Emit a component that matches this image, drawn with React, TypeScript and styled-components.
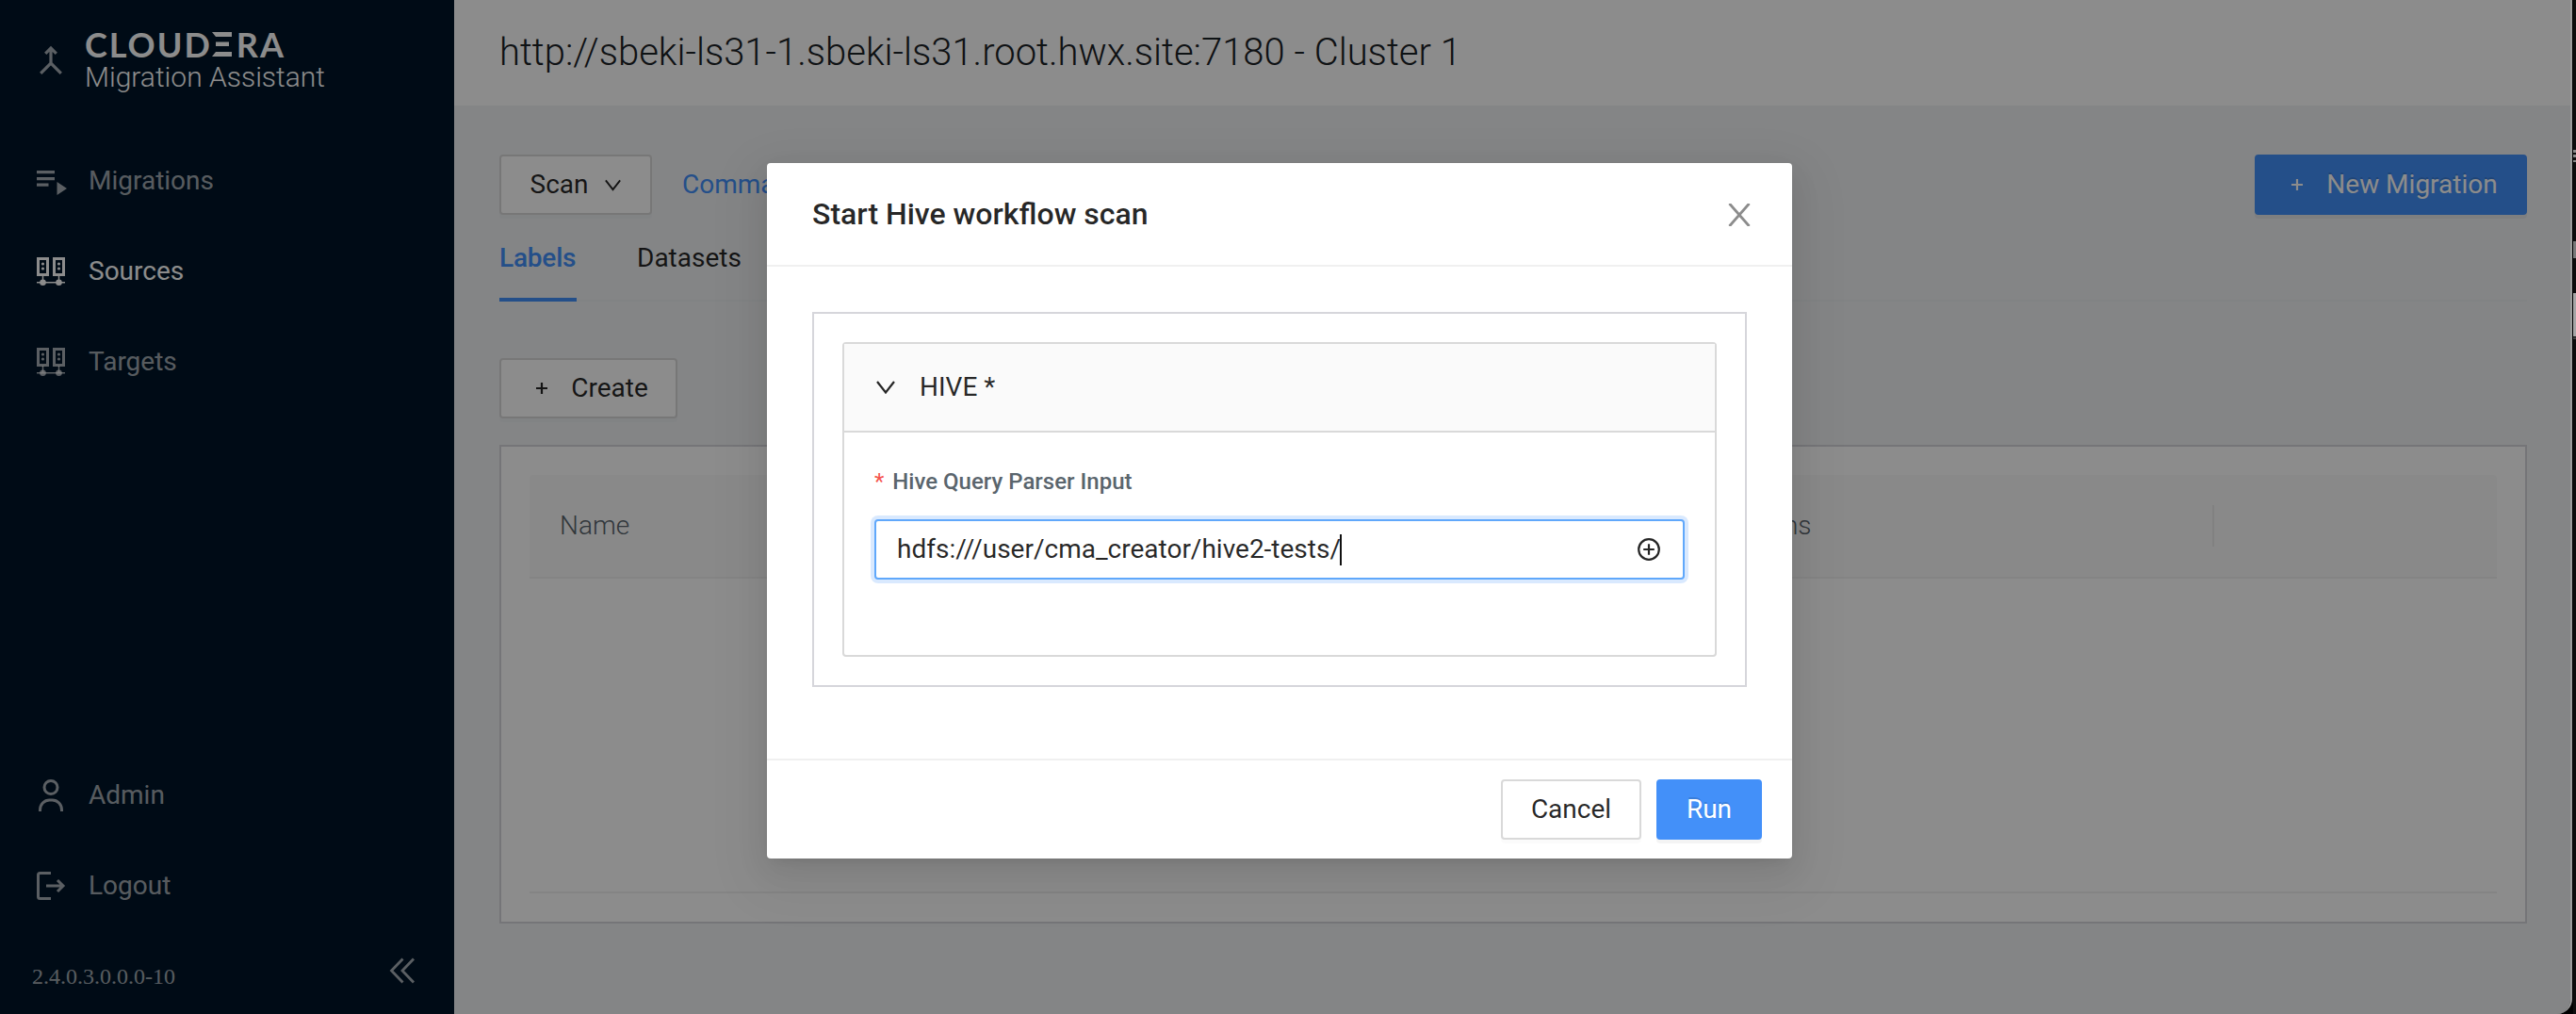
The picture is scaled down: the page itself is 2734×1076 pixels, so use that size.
import React from "react";
import styled, { createGlobalStyle, css } from "styled-components";

const GlobalStyle = createGlobalStyle`
  *, *::before, *::after { box-sizing: border-box; }
  html, body { margin: 0; padding: 0; background: #000; }
  body { font-family: Roboto, "Liberation Sans", sans-serif; font-size: 28px; overflow: hidden; }
  button, input { font-family: inherit; }
`;

const Desktop = styled.div`
  display: flex;
  width: 2734px;
  height: 1076px;
  background: #000;
  overflow: hidden;
`;

const Window = styled.div`
  position: relative;
  display: flex;
  width: 2730px;
  height: 1076px;
  border-right: 2px solid #9c9c9c;
  border-bottom-right-radius: 16px;
  overflow: hidden;
`;

const Backdrop = styled.div`
  display: flex;
  flex-direction: column;
  align-items: flex-end;
  width: 4px;
  padding: 159px 0 0 1px;
  background: #0d0d0d;
  border-left: 1px solid #000;
`;

const BackdropBar = styled.i<{ $gap: number; $height: number; $tone: string }>`
  flex: none;
  width: 3px;
  height: ${(p) => p.$height}px;
  margin-top: ${(p) => p.$gap}px;
  background: ${(p) => p.$tone};
`;

const Sidebar = styled.aside`
  display: flex;
  flex-direction: column;
  flex: none;
  width: 482px;
  height: 100%;
  background: #001529;
`;

const Brand = styled.div`
  display: flex;
  align-items: flex-start;
  height: 152px;
  padding: 28px 0 0 34px;
`;

const BrandIcon = styled.span`
  display: flex;
  width: 56px;
  padding: 20px 0 0 7px;
  color: rgba(255, 255, 255, 0.65);
`;

const BrandText = styled.div`
  display: flex;
  flex-direction: column;
  color: #fff;
`;

const Wordmark = styled.div`
  display: flex;
  height: 38px;
  font-family: Lato, "Open Sans", sans-serif;
  font-size: 36px;
  font-weight: 700;
  line-height: 38px;
  letter-spacing: 2px;
`;

const BarredLetter = styled.span`
  position: relative;
  width: 26px;
  color: transparent;

  svg {
    position: absolute;
    left: 0;
    top: 6px;
    color: #fff;
  }
`;

const ProductName = styled.div`
  font-size: 30px;
  font-weight: 300;
  line-height: 32px;
  white-space: nowrap;
`;

const Menu = styled.nav`
  display: flex;
  flex-direction: column;
  gap: 16px;
`;

const MenuItem = styled.a<{ $active?: boolean }>`
  display: flex;
  align-items: center;
  height: 80px;
  padding-left: 36px;
  color: ${(p) => (p.$active ? "#fff" : "rgba(255, 255, 255, 0.65)")};
  font-size: 28px;
  line-height: 40px;

  svg { flex: none; margin-right: 22px; }
`;

const SidebarFoot = styled.div`
  display: flex;
  flex-direction: column;
  margin-top: auto;
`;

const VersionRow = styled.div`
  display: flex;
  align-items: center;
  justify-content: space-between;
  height: 96px;
  padding: 4px 41px 0 34px;
  color: rgba(255, 255, 255, 0.65);
`;

const Version = styled.span`
  padding-top: 12px;
  font-family: "Liberation Serif", serif;
  font-size: 24px;
  line-height: 28px;
`;

const Main = styled.main`
  display: flex;
  flex: 1;
  flex-direction: column;
  min-width: 0;
  background: #f0f2f5;
`;

const PageHeader = styled.header`
  display: flex;
  align-items: center;
  height: 112px;
  padding: 0 48px;
  background: #fff;
  color: #1b2126;
`;

const PageTitle = styled.h1`
  margin: 0;
  font-size: 40px;
  font-weight: 300;
  line-height: 56px;
`;

const Content = styled.section`
  display: flex;
  flex-direction: column;
  align-items: stretch;
  padding: 52px 46px 0 48px;
`;

const Row = styled.div`
  display: flex;
  align-items: center;
`;

const Button = styled.button<{ $primary?: boolean; $w: number }>`
  display: flex;
  align-items: center;
  justify-content: center;
  width: ${(p) => p.$w}px;
  height: 64px;
  padding: 0;
  border: 2px solid #d9d9d9;
  border-radius: 4px;
  background: #fff;
  color: rgba(0, 0, 0, 0.85);
  font-size: 28px;
  line-height: 40px;
  white-space: nowrap;
  box-shadow: 0 4px 0 rgba(0, 0, 0, 0.016);
  ${(p) =>
    p.$primary &&
    css`
      border-color: #4390f9;
      background: #4390f9;
      color: #fff;
      text-shadow: 0 -2px 0 rgba(0, 0, 0, 0.12);
      box-shadow: 0 4px 0 rgba(0, 0, 0, 0.043);
    `}

  svg { flex: none; }
`;

const LeadingIcon = styled.span`
  display: flex;
  margin: 0 24px 0 7px;
`;

const TrailingIcon = styled.span`
  display: flex;
  margin-left: 18px;
`;

const CommandLink = styled.a`
  margin: 0 auto 0 32px;
  color: #4390f9;
  line-height: 40px;
`;

const Tabs = styled.div`
  display: flex;
  gap: 64px;
  height: 92px;
  border-bottom: 2px solid #eceef1;
`;

const Tab = styled.div<{ $active?: boolean }>`
  width: ${(p) => (p.$active ? "82px" : "auto")};
  height: 92px;
  padding-top: 26px;
  border-bottom: 4px solid ${(p) => (p.$active ? "#4390f9" : "transparent")};
  color: ${(p) => (p.$active ? "#4390f9" : "rgba(0, 0, 0, 0.85)")};
  font-weight: ${(p) => (p.$active ? 500 : 400)};
  letter-spacing: ${(p) => (p.$active ? "-0.2px" : "0")};
  line-height: 40px;
`;

const Actions = styled.div`
  display: flex;
  padding: 60px 0 28px;
`;

const Card = styled.div`
  height: 508px;
  padding: 30px;
  border: 2px solid #d6d6db;
  background: #fff;
`;

const TableHead = styled.div`
  display: flex;
  align-items: center;
  height: 110px;
  border-bottom: 2px solid #f0f0f0;
  border-radius: 4px 4px 0 0;
  background: #fafafa;
  color: #5a656d;
`;

const HeadCell = styled.div<{ $w?: number; $divided?: boolean }>`
  flex: ${(p) => (p.$w ? `0 0 ${p.$w}px` : 1)};
  height: 44px;
  padding-left: 32px;
  border-right: ${(p) => (p.$divided ? "2px solid #ececec" : "none")};
  font-weight: 300;
  line-height: 44px;
`;

const TableBody = styled.div`
  height: 334px;
  border-bottom: 2px solid #f0f0f0;
`;

const Mask = styled.div`
  position: absolute;
  inset: 0;
  display: flex;
  align-items: flex-start;
  justify-content: center;
  padding: 173px 12px 0 0;
  background: rgba(0, 0, 0, 0.45);
`;

const Dialog = styled.div`
  display: flex;
  flex-direction: column;
  width: 1088px;
  height: 738px;
  border-radius: 4px;
  background: #fff;
  color: rgba(0, 0, 0, 0.85);
  box-shadow: 0 6px 12px -8px rgba(0, 0, 0, 0.12), 0 12px 32px rgba(0, 0, 0, 0.08),
    0 18px 56px 16px rgba(0, 0, 0, 0.05);
`;

const DialogHeader = styled.div`
  display: flex;
  align-items: center;
  justify-content: space-between;
  height: 110px;
  padding: 0 44px 0 48px;
  border-bottom: 2px solid #f0f0f0;
  color: #8c8c8c;

  svg { margin-top: 2px; }
`;

const DialogTitle = styled.h2`
  margin: 0;
  color: rgba(0, 0, 0, 0.85);
  font-size: 32px;
  font-weight: 500;
  line-height: 44px;
`;

const DialogBody = styled.div`
  flex: 1;
  padding: 48px;
`;

const Group = styled.div`
  width: 992px;
  height: 398px;
  padding: 30px;
  border: 2px solid #d6d6db;
`;

const Collapse = styled.div`
  height: 334px;
  border: 2px solid #d9d9d9;
  border-radius: 4px;
`;

const CollapseHeader = styled.div`
  display: flex;
  align-items: center;
  height: 94px;
  padding-left: 34px;
  border-bottom: 2px solid #d9d9d9;
  background: #fafafa;
  line-height: 44px;

  svg { margin-right: 26px; }
`;

const CollapseBody = styled.div`
  padding: 32px;
`;

const FieldLabel = styled.label`
  display: flex;
  gap: 9px;
  height: 60px;
  color: #5a656d;
  font-size: 24px;
  font-weight: 500;
  line-height: 40px;
`;

const Required = styled.span`
  color: #f5544d;
  font-size: 24px;
  font-weight: 400;
`;

const Field = styled.div`
  display: flex;
  align-items: center;
  height: 64px;
  padding: 0 24px 0 22px;
  border: 2px solid #60a8fb;
  border-radius: 4px;
  background: #fff;
  box-shadow: 0 0 0 4px rgba(67, 144, 249, 0.2);

  svg { margin-left: auto; }
`;

const FieldValue = styled.span`
  line-height: 40px;
`;

const Caret = styled.i`
  width: 2px;
  height: 33px;
  margin-left: -1px;
  background: #111;
`;

const DialogFooter = styled.div`
  display: flex;
  justify-content: flex-end;
  gap: 16px;
  height: 106px;
  padding: 20px 32px;
  border-top: 2px solid #f0f0f0;
`;

const MergeIcon = () => (
  <svg width="26" height="32" viewBox="0 0 26 32" fill="none" stroke="currentColor" strokeWidth="3.2">
    <path d="M2.200 29.800 13 19l10.800 10.800M13 20.500V4M7.200 8.800 13 3l5.800 5.800" />
  </svg>
);

const PlaylistIcon = () => (
  <svg width="36" height="30" viewBox="0 0 36 30" fill="currentColor">
    <path d="M3 4h19v3.200H3zM3 11h19v3.200H3zM3 17.500h12.500v3.200H3zM24.500 16v14L35 23z" />
  </svg>
);

const ServersIcon = () => (
  <svg width="36" height="36" viewBox="0 0 36 36" fill="none" stroke="currentColor">
    <path d="M4.500 4.500h10v17h-10zM21.500 4.500h10v17h-10z" strokeWidth="3" />
    <path d="M9.500 22v8M26.500 22v8M3 29.800h30" strokeWidth="1.500" />
    <g fill="currentColor" stroke="none">
      <circle cx="9.500" cy="29.700" r="3.300" />
      <circle cx="26.500" cy="29.700" r="3.300" />
      <circle cx="9.500" cy="10" r="1.600" />
      <circle cx="9.500" cy="15" r="1.600" />
      <circle cx="26.500" cy="10" r="1.600" />
      <circle cx="26.500" cy="15" r="1.600" />
    </g>
  </svg>
);

const UserIcon = () => (
  <svg width="36" height="36" viewBox="0 0 36 36" fill="none" stroke="currentColor" strokeWidth="3">
    <circle cx="18" cy="9.500" r="7" />
    <path d="M6.500 35v-1.500c0-6 4.500-10.500 10-10.500h3c5.500 0 10 4.500 10 10.500V35" />
  </svg>
);

const LogoutIcon = () => (
  <svg width="36" height="36" viewBox="0 0 36 36" fill="none" stroke="currentColor" strokeWidth="3">
    <path d="M18 4.500H6.500a2 2 0 0 0-2 2v23a2 2 0 0 0 2 2H18M13 18h18M25 12l6 6-6 6" />
  </svg>
);

const CollapseIcon = () => (
  <svg width="28" height="28" viewBox="0 0 28 28" fill="none" stroke="currentColor" strokeWidth="2.800">
    <path d="M14.500 1.500 2.500 14l12 12.500M26 1.500 14 14l12 12.500" />
  </svg>
);

const ChevronDown = ({ width, height }: { width: number; height: number }) => (
  <svg width={width} height={height} viewBox="0 0 20 14" fill="none" stroke="currentColor" strokeWidth="2.200">
    <path d="M1 1l9 11.500L19 1" />
  </svg>
);

const PlusIcon = () => (
  <svg width="14" height="14" viewBox="0 0 14 14" fill="none" stroke="currentColor" strokeWidth="2.200">
    <path d="M7 1v12M1 7h12" />
  </svg>
);

const CloseIcon = () => (
  <svg width="24" height="24" viewBox="0 0 24 24" fill="none" stroke="currentColor" strokeWidth="2.800">
    <path d="M1.500 0 22.500 24M22.500 0 1.500 24" />
  </svg>
);

const PlusCircleIcon = () => (
  <svg width="24" height="24" viewBox="0 0 24 24" fill="none" stroke="currentColor" strokeWidth="2.200">
    <circle cx="12" cy="12" r="10.800" />
    <path d="M12 6.200v11.600M6.200 12h11.600" />
  </svg>
);

export default function App() {
  return (
    <Desktop>
      <GlobalStyle />
      <Window>
        <Sidebar>
          <Brand>
            <BrandIcon>
              <MergeIcon />
            </BrandIcon>
            <BrandText>
              <Wordmark>
                CLOUD
                <BarredLetter>
                  E
                  <svg width="22" height="26" viewBox="0 0 22 26" fill="currentColor">
                    <path d="M0 0h21v5H4zM4 10.500h14v4.500H4zM4 21h17v5H0z" />
                  </svg>
                </BarredLetter>
                RA
              </Wordmark>
              <ProductName>Migration Assistant</ProductName>
            </BrandText>
          </Brand>
          <Menu>
            <MenuItem>
              <PlaylistIcon />
              Migrations
            </MenuItem>
            <MenuItem $active>
              <ServersIcon />
              Sources
            </MenuItem>
            <MenuItem>
              <ServersIcon />
              Targets
            </MenuItem>
          </Menu>
          <SidebarFoot>
            <Menu>
              <MenuItem>
                <UserIcon />
                Admin
              </MenuItem>
              <MenuItem>
                <LogoutIcon />
                Logout
              </MenuItem>
            </Menu>
            <VersionRow>
              <Version>2.4.0.3.0.0.0-10</Version>
              <CollapseIcon />
            </VersionRow>
          </SidebarFoot>
        </Sidebar>

        <Main>
          <PageHeader>
            <PageTitle>http://sbeki-ls31-1.sbeki-ls31.root.hwx.site:7180 - Cluster 1</PageTitle>
          </PageHeader>
          <Content>
            <Row>
              <Button $w={162}>
                Scan
                <TrailingIcon>
                  <ChevronDown width={17} height={13} />
                </TrailingIcon>
              </Button>
              <CommandLink>Commands</CommandLink>
              <Button $primary $w={289}>
                <LeadingIcon>
                  <PlusIcon />
                </LeadingIcon>
                New Migration
              </Button>
            </Row>
            <Tabs>
              <Tab $active>Labels</Tab>
              <Tab>Datasets</Tab>
            </Tabs>
            <Actions>
              <Button $w={189}>
                <LeadingIcon>
                  <PlusIcon />
                </LeadingIcon>
                Create
              </Button>
            </Actions>
            <Card>
              <TableHead>
                <HeadCell $w={1236}>Name</HeadCell>
                <HeadCell $w={552} $divided>
                  Actions
                </HeadCell>
                <HeadCell />
              </TableHead>
              <TableBody />
            </Card>
          </Content>
        </Main>

        <Mask>
          <Dialog>
            <DialogHeader>
              <DialogTitle>Start Hive workflow scan</DialogTitle>
              <CloseIcon />
            </DialogHeader>
            <DialogBody>
              <Group>
                <Collapse>
                  <CollapseHeader>
                    <ChevronDown width={20} height={14} />
                    HIVE *
                  </CollapseHeader>
                  <CollapseBody>
                    <FieldLabel>
                      <Required>*</Required>
                      Hive Query Parser Input
                    </FieldLabel>
                    <Field>
                      <FieldValue>hdfs:///user/cma_creator/hive2-tests/</FieldValue>
                      <Caret />
                      <PlusCircleIcon />
                    </Field>
                  </CollapseBody>
                </Collapse>
              </Group>
            </DialogBody>
            <DialogFooter>
              <Button $w={149}>Cancel</Button>
              <Button $primary $w={112}>
                Run
              </Button>
            </DialogFooter>
          </Dialog>
        </Mask>
      </Window>
      <Backdrop>
        <BackdropBar $gap={0} $height={3} $tone="#8a8a8a" />
        <BackdropBar $gap={2} $height={3} $tone="#8a8a8a" />
        <BackdropBar $gap={3} $height={2} $tone="#8a8a8a" />
        <BackdropBar $gap={84} $height={18} $tone="#7a7a7a" />
        <BackdropBar $gap={37} $height={46} $tone="#a6a6a6" />
        <BackdropBar $gap={1} $height={2} $tone="#444" />
      </Backdrop>
    </Desktop>
  );
}
